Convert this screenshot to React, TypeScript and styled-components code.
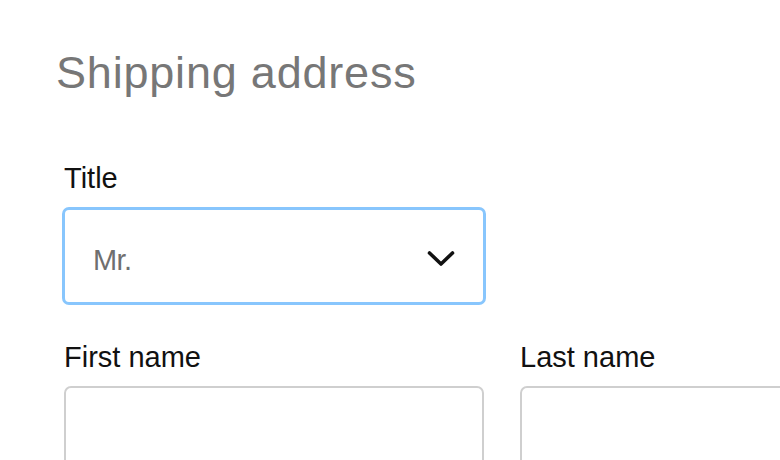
import React from "react";
import styled, { createGlobalStyle } from "styled-components";

const Global = createGlobalStyle`
  html, body { margin: 0; padding: 0; background: #fff; overflow: hidden; }
  body { font-family: "Liberation Sans", Arial, Helvetica, sans-serif; }
`;

const Page = styled.div`
  width: 1000px;
  padding: 47px 0 0 56px;
  box-sizing: border-box;
`;

const Heading = styled.h1`
  margin: 0;
  font-size: 45px;
  font-weight: 400;
  color: #777777;
  line-height: 52px;
  letter-spacing: 0.8px;
`;

const Form = styled.div`
  display: flex;
  flex-direction: column;
  gap: 35px;
  margin-top: 62px;
  padding-left: 8px;
`;

const Row = styled.div`
  display: flex;
  gap: 36px;
`;

const Field = styled.div`
  display: flex;
  flex-direction: column;
  gap: 12px;
  width: 420px;
`;

const Label = styled.label`
  font-size: 29px;
  line-height: 34px;
  color: #111;
`;

const SelectBox = styled.div`
  height: 98px;
  box-sizing: border-box;
  margin: 0 -2px;
  border: 3px solid #88c6fd;
  border-radius: 7px;
  display: flex;
  align-items: center;
  justify-content: space-between;
  padding: 0 28px 0 28px;
`;

const Value = styled.span`
  font-size: 29px;
  letter-spacing: -0.6px;
  color: #6f6f6f;
  margin-top: 8px;
`;

const ChevronWrap = styled.span`
  display: flex;
  margin-top: 6px;
`;

const Input = styled.div`
  height: 98px;
  box-sizing: border-box;
  border: 2px solid #cfcfcf;
  border-radius: 7px;
`;

const Chevron = () => (
  <svg width="28" height="18" viewBox="0 0 28 18" fill="none">
    <path d="M2.5 3 L14 14 L25.5 3" stroke="#111" strokeWidth="3.6" strokeLinecap="round" strokeLinejoin="round" />
  </svg>
);

export default function App() {
  return (
    <>
      <Global />
      <Page>
        <Heading>Shipping address</Heading>
        <Form>
          <Row>
            <Field>
              <Label>Title</Label>
              <SelectBox>
                <Value>Mr.</Value>
                <ChevronWrap>
                  <Chevron />
                </ChevronWrap>
              </SelectBox>
            </Field>
          </Row>
          <Row>
            <Field>
              <Label>First name</Label>
              <Input />
            </Field>
            <Field>
              <Label>Last name</Label>
              <Input />
            </Field>
          </Row>
        </Form>
      </Page>
    </>
  );
}
